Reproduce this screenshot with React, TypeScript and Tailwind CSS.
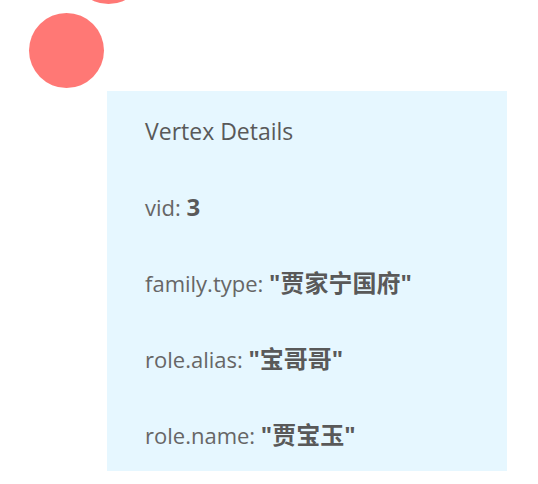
import React from "react";

const nodes = [
    { id: 1, left: 71, top: -71 },
    { id: 3, left: 29, top: 13 },
];

const props = [
    { key: "vid", value: "3" },
    { key: "family.type", value: '"贾家宁国府"' },
    { key: "role.alias", value: '"宝哥哥"' },
    { key: "role.name", value: '"贾宝玉"' },
];

export default function App() {
    return (
        <div
            className="relative w-[538px] h-[484px] overflow-hidden bg-white text-[#595959]"
            style={{ fontFamily: '"Open Sans", "Noto Sans", "Noto Sans CJK SC", sans-serif' }}
        >
            {/* graph nodes */}
            {nodes.map((n) => (
                <div
                    key={n.id}
                    className="absolute w-[75px] h-[75px] rounded-full bg-[#ff7875]"
                    style={{ left: n.left, top: n.top }}
                />
            ))}

            {/* tooltip */}
            <div className="absolute left-[107px] top-[91px] w-[400px] h-[380px] bg-[#e6f7ff] pl-[38px] pt-[26px] flex flex-col gap-[48px]">
                <div className="text-[23px] leading-[28px] font-medium">Vertex Details</div>
                {props.map((p) => (
                    <div key={p.key} className="text-[22px] leading-[28px] font-normal text-[#666666]">
                        {p.key}: <span className="text-[24px] leading-none font-bold text-[#595959]">{p.value}</span>
                    </div>
                ))}
            </div>
        </div>
    );
}
